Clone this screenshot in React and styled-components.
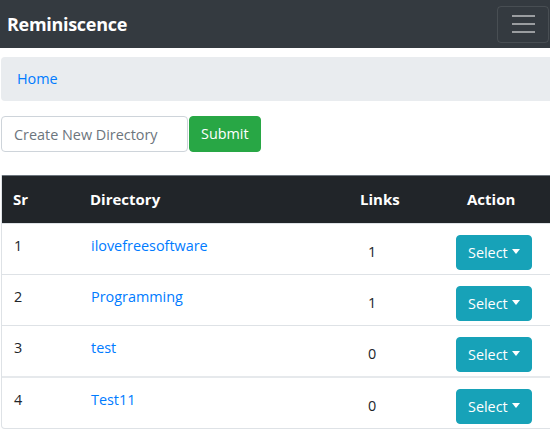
import React from "react";
import styled, { createGlobalStyle } from "styled-components";

const GlobalStyle = createGlobalStyle`
  html, body {
    margin: 0;
    padding: 0;
    background: #fff;
    overflow: hidden;
  }
  body {
    font-family: "Open Sans", "Noto Sans", sans-serif;
    font-size: 14.4px;
    line-height: 1.5;
    color: #212529;
  }
  * { box-sizing: border-box; }
`;

const Navbar = styled.nav`
  height: 48px;
  background: #343a40;
  display: flex;
  align-items: center;
  justify-content: space-between;
  padding: 0 1px 0 7px;
`;

const Brand = styled.a`
  color: #fff;
  font-size: 18px;
  font-weight: 700;
  letter-spacing: -0.3px;
  text-decoration: none;
`;

const Toggler = styled.button`
  width: 52px;
  height: 37px;
  background: transparent;
  border: 1px solid rgba(255, 255, 255, 0.1);
  border-radius: 4px;
  display: flex;
  flex-direction: column;
  align-items: center;
  justify-content: center;
  gap: 6px;
  padding: 0;
`;

const TogglerBar = styled.span`
  display: block;
  width: 23px;
  height: 2px;
  background: rgba(255, 255, 255, 0.5);
`;

const Page = styled.main`
  width: 575px;
  padding: 9px 0 0 1px;
`;

const Breadcrumb = styled.ol`
  list-style: none;
  margin: 0 0 15px;
  height: 44px;
  padding: 0 16px;
  display: flex;
  align-items: center;
  background: #e9ecef;
  border-radius: 4px;
`;

const Crumb = styled.a`
  color: #007bff;
  text-decoration: none;
`;

const Form = styled.form`
  display: flex;
  gap: 1px;
  margin-bottom: 23px;
`;

const Input = styled.input`
  width: 187px;
  height: 36px;
  padding: 0 12px;
  font: inherit;
  color: #495057;
  border: 1px solid #ced4da;
  border-radius: 4px;
  &::placeholder {
    color: #6c757d;
  }
`;

const Button = styled.button`
  height: ${(p) => p.$h || "36px"};
  padding: 0 ${(p) => p.$px || "12px"};
  font: inherit;
  color: #fff;
  background: ${(p) => p.$bg};
  border: 1px solid ${(p) => p.$bg};
  border-radius: 4px;
  display: inline-flex;
  align-items: center;
`;

const Caret = styled.span`
  display: inline-block;
  margin-left: 4px;
  border-top: 5px solid #fff;
  border-left: 4.5px solid transparent;
  border-right: 4.5px solid transparent;
  margin-top: -2px;
`;

const Table = styled.div`
  border: 1px solid #dee2e6;
  border-top: none;
  border-radius: 0 0 4px 4px;
  overflow: hidden;
`;

const cols = "77px 270px 96px 1fr";

const HeadRow = styled.div`
  display: grid;
  grid-template-columns: ${cols};
  height: 48px;
  background: #212529;
  border-top: 1px solid #6c757d;
  color: #fff;
  font-weight: 700;
  font-size: 15px;
  align-items: center;
  margin: 0 -1px;
`;

const HeadCell = styled.div`
  padding-left: ${(p) => p.$pl || "12px"};
`;

const Row = styled.div`
  display: grid;
  grid-template-columns: ${cols};
  height: ${(p) => (p.$split ? "52px" : "51px")};
  border-top: ${(p) => (p.$split ? "2px" : "1px")} solid
    ${(p) => (p.$split ? "#e6e9ec" : "#dee2e6")};
  &:first-child {
    border-top: none;
    height: 50px;
  }
`;

const Cell = styled.div`
  padding: ${(p) => (p.$mid ? "5px 0 0 19px" : "11px 0 0 12px")};
  align-self: ${(p) => (p.$mid ? "center" : "start")};
`;

const ActionCell = styled.div`
  padding: 11px 0 0 11px;
`;

const DirLink = styled.a`
  color: #007bff;
  text-decoration: none;
`;

const rows = [
  { sr: 1, name: "ilovefreesoftware", links: 1 },
  { sr: 2, name: "Programming", links: 1 },
  { sr: 3, name: "test", links: 0 },
  { sr: 4, name: "Test11", links: 0, split: true },
];

export default function App() {
  return (
    <>
      <GlobalStyle />
      <Navbar>
        <Brand href="#">Reminiscence</Brand>
        <Toggler aria-label="Toggle navigation">
          <TogglerBar />
          <TogglerBar />
          <TogglerBar />
        </Toggler>
      </Navbar>
      <Page>
        <Breadcrumb>
          <li>
            <Crumb href="#">Home</Crumb>
          </li>
        </Breadcrumb>
        <Form onSubmit={(e) => e.preventDefault()}>
          <Input placeholder="Create New Directory" />
          <Button $bg="#28a745" $px="11px">Submit</Button>
        </Form>
        <Table>
          <HeadRow>
            <HeadCell>Sr</HeadCell>
            <HeadCell>Directory</HeadCell>
            <HeadCell>Links</HeadCell>
            <HeadCell $pl="23px">Action</HeadCell>
          </HeadRow>
          {rows.map((r) => (
            <Row key={r.sr} $split={r.split}>
              <Cell>{r.sr}</Cell>
              <Cell>
                <DirLink href="#">{r.name}</DirLink>
              </Cell>
              <Cell $mid>{r.links}</Cell>
              <ActionCell>
                <Button $bg="#17a2b8" $h="35px" $px="11px">
                  Select
                  <Caret />
                </Button>
              </ActionCell>
            </Row>
          ))}
        </Table>
      </Page>
    </>
  );
}
